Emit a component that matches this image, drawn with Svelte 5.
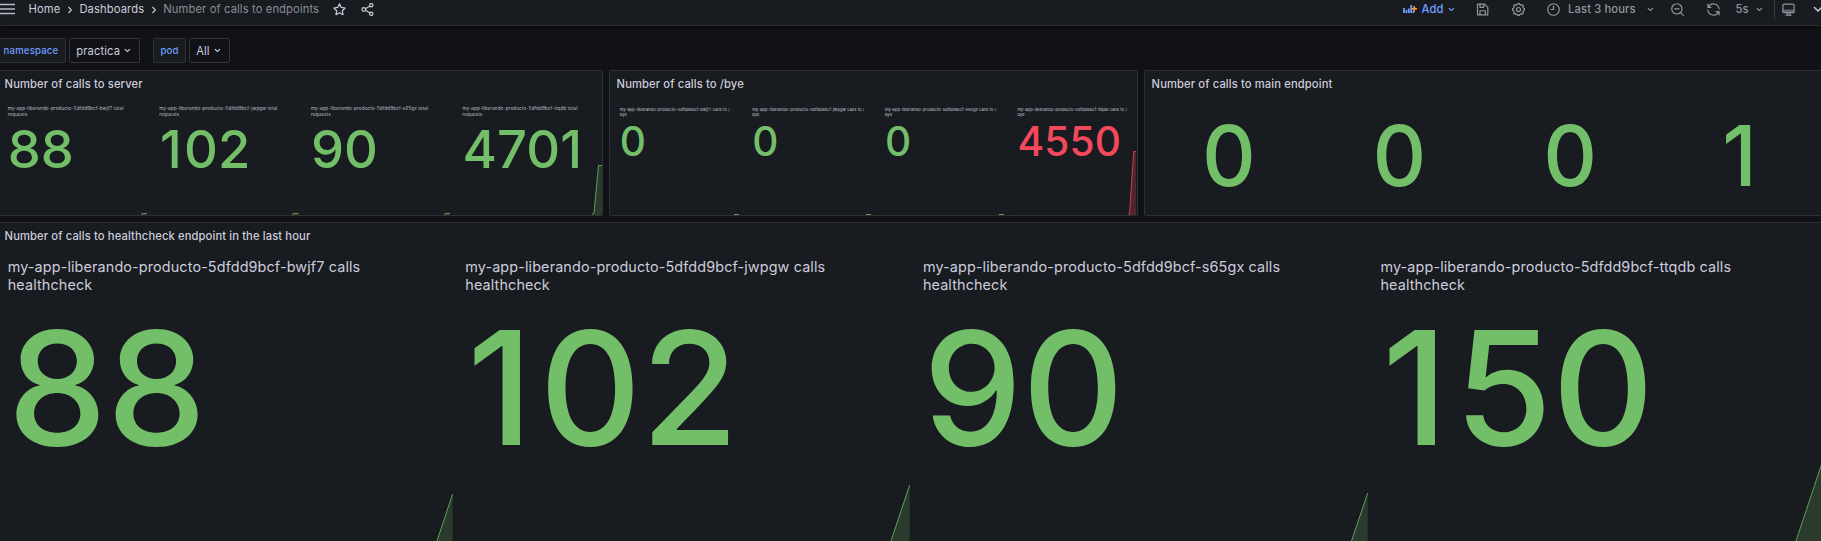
<script>
  const pods = ['bwjf7', 'jwpgw', 's65gx', 'ttqdb'];
  const name = (pod) => `my-app-liberando-producto-5dfdd9bcf-${pod}`;
  const stats = (values, suffix) => values.map((value, i) => ({ value, label: suffix ? `${name(pods[i])} ${suffix}` : '' }));

  const gearPoints = () => {
    const pts = [];
    for (let i = 0; i < 8; i++) {
      const a = (i * Math.PI) / 4;
      for (const [d, r] of [[-0.26, 8], [-0.17, 9.6], [0.17, 9.6], [0.26, 8]]) {
        pts.push(`${(12 + r * Math.cos(a + d)).toFixed(2)},${(12 + r * Math.sin(a + d)).toFixed(2)}`);
      }
    }
    return pts.join(' ');
  };

  const panels = [
    {
      id: 'server', title: 'Number of calls to server', box: '-2 71 604 144',
      stats: stats([88, 102, 90, 4701], 'total requests'),
      lines: ['141,214.5 142,213.8 147,213.3', '292,214.5 293,213.8 298.5,213.3', '444,214.5 445,213.8 450,213.3', '592,214.5 594,213 598.5,165.5 602,165.5'],
      dots: [150.5, 302.5, 453.5].flatMap((x) => [165, 188, 211].map((y) => [x, y]))
    },
    {
      id: 'bye', title: 'Number of calls to /bye', box: '610 71 527 144',
      stats: stats([0, 0, 0, 4550], 'calls to /\u200bbye'),
      lines: ['734,214.5 739,214.5', '866,214.5 871,214.5', '999,214.5 1004,214.5'],
      alert: '1128,214.5 1129.5,214 1133.7,151.5 1136,151.5',
      dots: [610.5, 743.5, 875.5, 1008.5].flatMap((x) => [151, 159, 181, 187, 210].map((y) => [x, y]))
    },
    { id: 'main', title: 'Number of calls to main endpoint', stats: stats([0, 0, 0, 1], ''), lines: [], dots: [] },
    {
      id: 'health', title: 'Number of calls to healthcheck endpoint in the last hour', box: '-2 223 1835 324',
      stats: stats([88, 102, 90, 150], 'calls healthcheck'),
      lines: ['435,547 452.6,494', '889,547 909.7,485', '1349.5,547 1367.7,493', '1794,547 1826,451'],
      dots: [456.5, 913.5, 1371.5].flatMap((x) => [455, 487, 499, 518].map((y) => [x, y]))
    }
  ];
  const area = (pts) => {
    const p = pts.split(' ');
    return `${p[0].split(',')[0]},550 ${pts} ${p[p.length - 1].split(',')[0]},550`;
  };
</script>

{#snippet angle()}
  <svg class="angle" viewBox="0 0 24 24"><path d="M17,9.17a1,1,0,0,0-1.41,0L12,12.71,8.46,9.17a1,1,0,0,0-1.41,0,1,1,0,0,0,0,1.42l4.24,4.24a1,1,0,0,0,1.42,0L17,10.59A1,1,0,0,0,17,9.17Z" /></svg>
{/snippet}

<div class="page">
  <header>
    <svg class="burger" viewBox="0 0 15 12"><path d="M0 1.5h15M0 6h15M0 10.5h15" /></svg>
    <nav>
      <span class="link">Home</span>
      <svg class="sep" viewBox="0 0 6 8"><path d="M1.4 1 4.4 4 1.4 7" /></svg>
      <span class="link">Dashboards</span>
      <svg class="sep" viewBox="0 0 6 8"><path d="M1.4 1 4.4 4 1.4 7" /></svg>
      <span class="current">Number of calls to endpoints</span>
    </nav>
    <svg class="icon star" viewBox="0 0 24 24"><path d="M12 3l2.8 5.7 6.2.9-4.5 4.4 1.1 6.2L12 17.3l-5.6 2.9L7.5 14 3 9.6l6.2-.9z" /></svg>
    <svg class="icon share" viewBox="0 0 24 24"><circle cx="18" cy="5.2" r="2.7" /><circle cx="18" cy="18.8" r="2.7" /><circle cx="6" cy="12" r="2.9" /><path d="M8.6 10.7l6.9-4M8.6 13.3l6.9 4" /></svg>

    <div class="tools">
      <div class="tool add">
        <svg class="add-icon" viewBox="0 0 14 10"><path class="bars" d="M1 4v5M3.4 6v3M5.8 4.500v4.500M8.2 1v8" /><path class="bars" d="M10.4 7v2" /><path class="plus" d="M11.3 2v5.5M8.6 4.750h5.400" /></svg>
        <span>Add</span>{@render angle()}
      </div>
      <div class="tool save"><svg class="icon" viewBox="0 0 24 24"><path d="M4 3.5h11.5L20.5 8.5v12H4zM8 3.5v5h6v-5M8 20.5v-6.5h8.5v6.5" /></svg></div>
      <div class="tool gear"><svg class="icon" viewBox="0 0 24 24"><polygon points={gearPoints()} /><circle cx="12" cy="12" r="3.2" /></svg></div>
      <div class="tool time">
        <svg class="icon" viewBox="0 0 24 24"><circle cx="12" cy="12" r="9.2" /><path d="M12 6.5v5.5H8" /></svg>
        <span>Last 3 hours</span>{@render angle()}
      </div>
      <div class="tool zoom-out"><svg class="icon" viewBox="0 0 24 24"><circle cx="11" cy="11" r="8.2" /><path d="M17 17l4.5 4.5M7.5 11h7" /></svg></div>
      <div class="tool sync"><svg class="icon" viewBox="0 0 24 24"><path d="M3 3.5v5h5M3.6 8.3A9.2 9.2 0 0 1 21 11M21 20.5v-5h-5M20.4 15.7A9.2 9.2 0 0 1 3 13" /></svg></div>
      <div class="tool rate"><span>5s</span>{@render angle()}</div>
      <div class="tool kiosk"><svg class="icon" viewBox="0 0 24 24"><rect x="3" y="3.5" width="18" height="13.5" rx="2" /><path class="solid" d="M3 12h18v3.5a2 2 0 0 1-2 2H5a2 2 0 0 1-2-2z" /><path d="M8 21h8M10 17v4M14 17v4" /></svg></div>
      <svg class="fold" viewBox="0 0 10 6"><path d="M1 1l4 4 4-4" /></svg>
    </div>
  </header>

  <div class="filters">
    <span class="key first">namespace</span>
    <span class="pick first-pick">practica{@render angle()}</span>
    <span class="key second">pod</span>
    <span class="pick second-pick">All{@render angle()}</span>
  </div>

  <main>
    {#each panels as p (p.id)}
      <section class={p.id}>
        <h2>{p.title}</h2>
        <div class="stats">
          {#each p.stats as s}
            <div class="stat">
              {#if s.label}<div class="label">{s.label}</div>{/if}
              <div class="value" class:red={s.value === 4550} class:lead-one={String(s.value).startsWith('1')}>{s.value}</div>
            </div>
          {/each}
        </div>
        {#if p.box}
          <svg class="spark" viewBox={p.box} preserveAspectRatio="none">
            {#each p.dots as [x, y]}<rect class="dot" x={x - 0.5} {y} width="1" height="1" />{/each}
            {#each p.lines as l}<polygon points={area(l)} /><polyline points={l} />{/each}
            {#if p.alert}<g class="alert"><polygon points={area(p.alert)} /><polyline points={p.alert} /></g>{/if}
          </svg>
        {/if}
      </section>
    {/each}
  </main>
</div>

<style>
  :global(body) { margin: 0; background: #111217; overflow: hidden; }
  .page {
    width: 1821px; height: 541px; overflow: hidden; background: #111217; color: #ccccdc;
    font-family: Inter, "Liberation Sans", sans-serif; font-size: 11.2px; line-height: 20px; letter-spacing: 0.12px;
    font-variation-settings: 'opsz' 14;
  }
  svg { flex: none; display: block; }
  header {
    display: flex; align-items: center; height: 18px; padding-bottom: 7px; border-bottom: 1px solid #2d2f34;
    background: #181b1f; box-shadow: 0 1px 5px rgba(0, 0, 0, 0.55); white-space: nowrap;
  }
  .burger { width: 15px; height: 12px; stroke: #ccccdc; stroke-width: 1.3; opacity: 0.9; }
  nav { display: flex; align-items: center; margin-left: 13.6px; width: 291px; }
  .sep { width: 6px; height: 8px; fill: none; stroke: #ccccdc; stroke-width: 1.1; margin: 2px 6px 0 7px; }
  .current { color: #8b8c99; }
  .icon { width: 15px; height: 15px; fill: none; stroke: currentColor; stroke-width: 1.9; stroke-linecap: round; stroke-linejoin: round; }
  .icon .solid { fill: currentColor; fill-opacity: 0.6; stroke: none; }
  .star { margin-left: 12.5px; }
  .share { margin-left: 12.5px; }
  .angle { width: 12.8px; height: 12.8px; fill: currentColor; }
  .tools { display: flex; align-items: center; margin-left: auto; width: 418px; color: #94959f; font-weight: 500; }
  .tool { display: flex; align-items: center; box-sizing: border-box; height: 18px; flex: none; }
  .add { width: 72.3px; color: #6e9fff; }
  .add-icon { width: 14px; height: 10px; fill: none; stroke-width: 1.8; margin-right: 4.5px; }
  .bars { stroke: #6e9fff; }
  .plus { stroke: #ff9830; stroke-width: 1.6; }
  .add .angle { margin-left: 1px; }
  .save { width: 36px; }
  .gear { width: 35px; }
  .time { width: 123.7px; }
  .time span { width: 75.5px; margin-left: 6.8px; }
  .zoom-out { width: 36px; }
  .sync { width: 29.5px; }
  .rate { width: 38.5px; }
  .rate span { margin-right: 4.5px; }
  .kiosk { width: 39.5px; height: 19px; border-left: 1px solid #3a3c42; padding-left: 6.5px; }
  .kiosk .icon { margin-top: 1px; }
  .fold { width: 10px; height: 6px; fill: none; stroke: #ccccdc; stroke-width: 1.4; }

  .filters { display: flex; margin: 12px 0 0; height: 25px; }
  .key, .pick { display: flex; align-items: center; box-sizing: border-box; height: 25px; border: 1px solid #2d2f34; border-radius: 1.6px; }
  .key { background: #181b1f; color: #6e9fff; font-weight: 500; font-size: 9.6px; }
  .key.first { width: 68px; margin-left: -2px; padding-left: 4.6px; letter-spacing: 0.17px; }
  .key.second { width: 33px; margin-left: 13px; padding-left: 6.5px; }
  .pick { background: #111217; border-color: #34363c; padding-left: 6.2px; }
  .first-pick { width: 71px; margin-left: 3px; }
  .second-pick { width: 41px; margin-left: 3px; }
  .pick .angle { margin-left: 1.4px; }

  main { display: grid; grid-template-columns: 606px 529px 690px; grid-template-rows: 146px 326px; gap: 6px; margin: 7px 0 0 -3px; width: 1837px; }
  section { position: relative; box-sizing: border-box; background: #181b1f; border: 1px solid #2d2f34; border-radius: 1.6px; overflow: hidden; }
  .health { grid-column: 1 / -1; }
  h2 { margin: 3px 0 0 6.6px; font-size: 11.2px; line-height: 20px; font-weight: 500; }
  .stats { display: flex; margin-left: 9.7px; }
  .stat { flex: none; }
  .label { white-space: normal; }
  .value { color: #73bf69; font-weight: 500; line-height: 1; }
  .value.red { color: #f2495c; }
  .lead-one { padding-left: 0.012em; }
  .lead-one::first-letter { letter-spacing: 0.044em; }
  .server .stats { margin-top: 11.6px; }
  .server .stat { width: 151.6px; }
  .server .label { font-size: 4.6px; line-height: 6px; width: 130px; height: 12px; margin-bottom: 5px; opacity: 0.9; }
  .server .value { font-size: 52.5px; }
  .bye .stats { margin-top: 13px; }
  .bye .stat { width: 132.6px; }
  .bye .label { font-size: 4px; line-height: 5px; width: 114px; height: 10px; margin-bottom: 4.5px; }
  .bye .value { font-size: 40.6px; }
  .main .stats { margin: 20px 0 0 -1.3px; }
  .main .stat { width: 170.6px; text-align: center; }
  .main .value { font-size: 83.4px; }
  .health .stats { margin-top: 12px; }
  .health .stat { width: 457.6px; }
  .health .label { font-size: 14.4px; line-height: 18px; width: 380px; height: 36px; margin-bottom: 15px; }
  .health .value { font-size: 157.6px; }

  .spark { position: absolute; inset: 0; width: 100%; height: 100%; }
  .spark polyline { fill: none; stroke: #5da055; stroke-width: 1; }
  .spark polygon { fill: rgba(115, 191, 105, 0.2); }
  .spark .alert polyline { stroke: #c93f50; }
  .spark .alert polygon { fill: rgba(242, 73, 92, 0.25); }
  .dot { fill: rgba(255, 255, 255, 0.07); }
</style>
